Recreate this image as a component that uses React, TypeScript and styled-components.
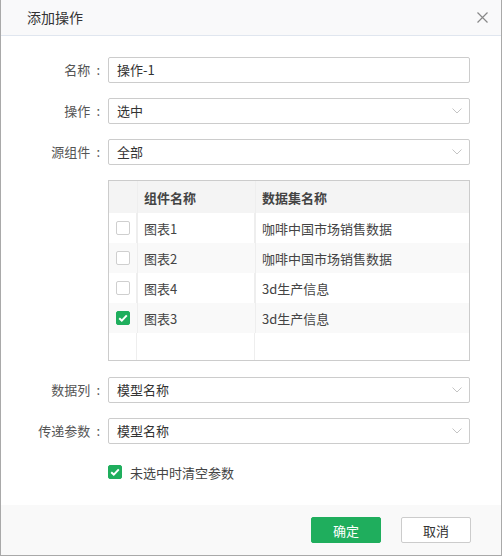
import React from 'react';
import styled, { createGlobalStyle } from 'styled-components';

const GlobalStyle = createGlobalStyle`
html, body {
  margin: 0;
  padding: 0;
  background: #fff;
}
* {
  box-sizing: border-box;
}
`;

const DialogWrapper = styled.div`
width: 502px;
height: 556px;
display: flex;
flex-direction: column;
border: 1px solid #a9a9a9;
border-top: 0;
background: #fff;
font-family: "Noto Sans CJK SC", "Noto Sans", sans-serif;
font-size: 13px;
color: #333;
`;

const HeaderWrapper = styled.div`
height: 36px;
flex-shrink: 0;
display: flex;
align-items: center;
justify-content: space-between;
padding: 0 12px 0 26px;
background: #f9f9fa;
border-bottom: 1px solid #e0e6ef;
`;

const Title = styled.div`
font-size: 14px;
color: #333;
margin-top: -1px;
`;

const CloseButton = styled.div`
width: 14px;
height: 14px;
display: flex;
align-items: center;
justify-content: center;
cursor: pointer;
`;

const BodyWrapper = styled.div`
flex: 1;
padding: 21px 30px 0 0;
display: flex;
flex-direction: column;
`;

const FormRow = styled.div<{ $gap?: number }>`
display: flex;
align-items: flex-start;
margin-bottom: ${(p) => (p.$gap ?? 15)}px;
`;

const Label = styled.div`
width: 107px;
flex-shrink: 0;
height: 26px;
line-height: 26px;
text-align: right;
padding-right: 8px;
color: #555;
`;

const Colon = styled.span`
margin-left: 6px;
`;

const InputBox = styled.div`
position: relative;
width: 362px;
height: 26px;
line-height: 24px;
border: 1px solid #ccc;
border-radius: 2px;
padding: 0 8px;
color: #333;
background: #fff;
`;

const Chevron = styled.svg`
position: absolute;
right: 7px;
top: 9px;
`;

const Table = styled.div`
width: 362px;
height: 181px;
margin-left: 107px;
border: 1px solid #ccc;
display: grid;
grid-template-columns: 28px 118px 1fr;
grid-auto-rows: 30px;
grid-template-rows: 32px;
background: linear-gradient(#eee, #eee) 27px 0 / 1px 100% no-repeat,
  linear-gradient(#eee, #eee) 145px 0 / 1px 100% no-repeat, #fff;
`;

const Cell = styled.div<{ $head?: boolean; $stripe?: boolean; $first?: boolean }>`
display: flex;
align-items: center;
padding-left: ${(p) => (p.$first ? 7 : 6)}px;
background: ${(p) => (p.$head ? '#f4f4f4' : p.$stripe ? '#f9f9f9' : 'transparent')};
font-weight: ${(p) => (p.$head ? 700 : 400)};
color: #444;
border-left: ${(p) => (p.$first ? 'none' : '1px solid #eee')};
`;

const Box = styled.div<{ $checked?: boolean }>`
width: 14px;
height: 14px;
border-radius: 2px;
border: 1px solid ${(p) => (p.$checked ? '#1fae5d' : '#cfcfcf')};
background: ${(p) => (p.$checked ? '#1fae5d' : '#fff')};
display: flex;
align-items: center;
justify-content: center;
flex-shrink: 0;
`;

const CheckRow = styled.div`
display: flex;
align-items: center;
gap: 8px;
height: 14px;
margin: 6px 0 0 107px;
color: #444;
`;

const FooterWrapper = styled.div`
height: 50px;
flex-shrink: 0;
display: flex;
align-items: center;
justify-content: flex-end;
gap: 20px;
padding-right: 30px;
background: #f9f9f9;
`;

const Button = styled.div<{ $primary?: boolean }>`
width: 70px;
height: 26px;
display: flex;
align-items: center;
justify-content: center;
border-radius: 2px;
border: 1px solid ${(p) => (p.$primary ? '#1fae5d' : '#ccc')};
background: ${(p) => (p.$primary ? '#1fae5d' : '#fff')};
color: ${(p) => (p.$primary ? '#fff' : '#333')};
cursor: pointer;
`;

const Check: React.FC = () => (
  <svg width="10" height="8" viewBox="0 0 10 8">
    <path d="M1.2 4.2 L3.8 6.6 L8.8 1.4" fill="none" stroke="#fff" strokeWidth="2" />
  </svg>
);

const Checkbox: React.FC<{ checked?: boolean }> = ({ checked }) => (
  <Box $checked={checked}>{checked && <Check />}</Box>
);

const Select: React.FC<{ value: string }> = ({ value }) => (
  <InputBox>
    {value}
    <Chevron width="10" height="6" viewBox="0 0 10 6">
      <path d="M0.5 0.5 L5 5 L9.5 0.5" fill="none" stroke="#c4c4c4" strokeWidth="1" />
    </Chevron>
  </InputBox>
);

const FieldLabel: React.FC<{ text: string }> = ({ text }) => (
  <Label>
    {text}
    <Colon>:</Colon>
  </Label>
);

const rows = [
  { name: '图表1', data: '咖啡中国市场销售数据', checked: false },
  { name: '图表2', data: '咖啡中国市场销售数据', checked: false },
  { name: '图表4', data: '3d生产信息', checked: false },
  { name: '图表3', data: '3d生产信息', checked: true },
];

const App: React.FC = () => {
  return (
    <>
      <GlobalStyle />
      <DialogWrapper>
        <HeaderWrapper>
          <Title>添加操作</Title>
          <CloseButton>
            <svg width="11" height="11" viewBox="0 0 11 11">
              <path d="M0.5 0.5 L10.5 10.5 M10.5 0.5 L0.5 10.5" stroke="#888" strokeWidth="1.2" />
            </svg>
          </CloseButton>
        </HeaderWrapper>
        <BodyWrapper>
          <FormRow>
            <FieldLabel text="名称" />
            <InputBox>操作-1</InputBox>
          </FormRow>
          <FormRow>
            <FieldLabel text="操作" />
            <Select value="选中" />
          </FormRow>
          <FormRow>
            <FieldLabel text="源组件" />
            <Select value="全部" />
          </FormRow>
          <FormRow $gap={16}>
            <Table>
              <Cell $head $first />
              <Cell $head>组件名称</Cell>
              <Cell $head>数据集名称</Cell>
              {rows.map((r, i) => (
                <React.Fragment key={r.name}>
                  <Cell $first $stripe={i % 2 === 1}>
                    <Checkbox checked={r.checked} />
                  </Cell>
                  <Cell $stripe={i % 2 === 1}>{r.name}</Cell>
                  <Cell $stripe={i % 2 === 1}>{r.data}</Cell>
                </React.Fragment>
              ))}
            </Table>
          </FormRow>
          <FormRow>
            <FieldLabel text="数据列" />
            <Select value="模型名称" />
          </FormRow>
          <FormRow>
            <FieldLabel text="传递参数" />
            <Select value="模型名称" />
          </FormRow>
          <CheckRow>
            <Checkbox checked />
            未选中时清空参数
          </CheckRow>
        </BodyWrapper>
        <FooterWrapper>
          <Button $primary>确定</Button>
          <Button>取消</Button>
        </FooterWrapper>
      </DialogWrapper>
    </>
  );
};

export default App;
